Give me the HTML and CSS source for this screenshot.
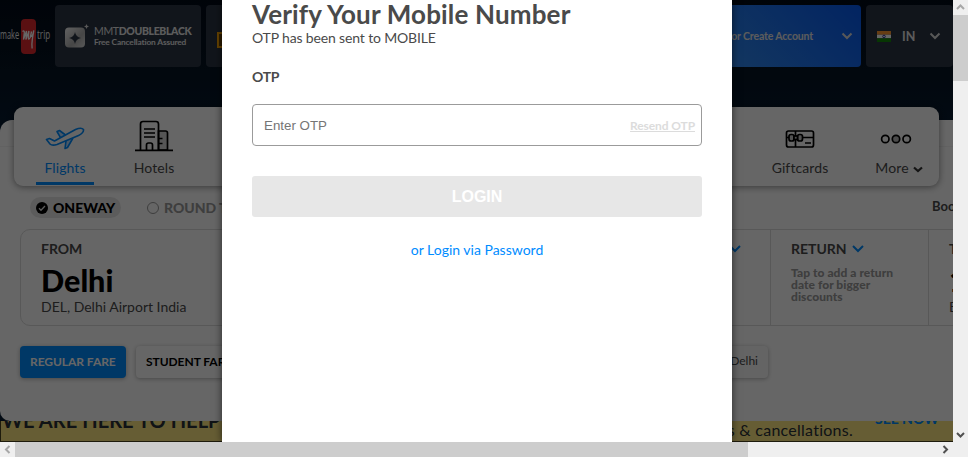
FILE: index.html
```html
<!DOCTYPE html>
<html lang="en">
<head>
<meta charset="utf-8">
<title>MakeMyTrip</title>
<link rel="stylesheet" href="styles.css">
</head>
<body>
<div class="frame">
  <div class="view">
    <div class="page">
      <header class="header">
        <div class="logo"><span class="logo-make">make</span><span class="logo-my"><svg width="15" height="35" viewBox="0 0 15 35"><path d="M1.500 12.500q2-1.500 1.800 1l-.8 7 3-8.500-.6 8.500 3-8.500-.5 7q.2 2.500 1.800-.5l1.300-6q-1 5 0 5 1.200-.5 2.300-6l-1.500 9q-.7 5-.2 9" fill="none" stroke="#fff" stroke-width="1.300"/></svg></span><span class="logo-trip">trip</span></div>
        <div class="pill pill-black">
          <svg class="star" width="24" height="24" viewBox="0 0 24 24"><defs><linearGradient id="s" x1="0" y1="0" x2="1" y2="1"><stop offset="0" stop-color="#f4f4f4"/><stop offset=".6" stop-color="#b0b0b0"/><stop offset="1" stop-color="#ddd"/></linearGradient></defs><rect x="0" y="3.500" width="20" height="20" rx="4" fill="url(#s)"/><path d="M10 8q.8 5.200 6 6-5.200.8-6 6-.8-5.200-6-6 5.200-.8 6-6z" fill="#2b3544"/><path d="M21.500 0l.8 1.700 1.700.8-1.700.8-.8 1.700-.8-1.700-1.700-.8 1.700-.8z" fill="#ddd"/></svg>
          <div class="black-text"><div class="black-title">MMT<b>DOUBLEBLACK</b></div><div class="black-sub">Free Cancellation Assured</div></div>
        </div>
        <div class="pill pill-biz"><span class="biz"></span></div>
        <div class="pill pill-login"><span>Login or Create Account</span><svg width="12" height="8" viewBox="0 0 12 8"><path d="M1.500 1.500L6 6l4.500-4.500" fill="none" stroke="#ddd" stroke-width="2"/></svg></div>
        <div class="pill pill-in"><svg width="14" height="11" viewBox="0 0 14 11"><path fill="#ff9933" d="M0 0h14v3.700H0z"/><path fill="#fff" d="M0 3.700h14v3.600H0z"/><path fill="#138808" d="M0 7.300h14V11H0z"/><circle cx="7" cy="5.500" r="1.300" fill="none" stroke="#339"/></svg><b>IN</b><svg width="12" height="8" viewBox="0 0 12 8"><path d="M1.500 1.500L6 6l4.500-4.500" fill="none" stroke="#ddd" stroke-width="2"/></svg></div>
      </header>
      <nav class="nav">
        <div class="tab tab-active">
          <svg width="40" height="24" viewBox="0 0 40 24" fill="none" stroke="#008cff" stroke-width="1.600" stroke-linejoin="round"><path d="M20.500 8L14.500 3.500l-2.500 1 3.500 6.200" fill="#b9dcff"/><path d="M28 11l-5.500 9.500-2.500 1 1-7.500" fill="#b9dcff"/><path d="M1.500 12.500l3-1 5 2.500L30.500 2.500q6-2.500 8 0 .5 3.500-5 6L12 17.500Q7 19 5 17z" fill="#fff"/></svg>
          <span>Flights</span>
        </div>
        <div class="tab">
          <svg width="40" height="32" viewBox="0 0 40 32" fill="none" stroke="#000" stroke-width="1.700"><path d="M24.500 11h7q2 0 2 2v17h-9z" fill="#d8d8d8"/><path d="M6.500 30V4q0-2.500 2.500-2.500h13q2.500 0 2.500 2.500v26M1 30.300h38M10 9h11M10 13h11M10 17h11M24.500 18.500h4M24.500 23.500h4M12.500 30v-5q0-2 2-2h2q2 0 2 2v5"/></svg>
          <span>Hotels</span>
        </div>
        <div class="tab tab-gift">
          <svg width="30" height="20" viewBox="0 0 30 20" fill="none" stroke="#000" stroke-width="1.700"><rect x="1.500" y="2" width="27" height="16" rx="2"/><path d="M1.500 8.500h27M10.500 2v16M20 14h6"/><rect x="4" y="5.500" width="5" height="6.500" rx="2" fill="#ccc"/><rect x="12.500" y="5.500" width="5" height="6.500" rx="2" fill="#ccc"/><rect x="9" y="7" width="3.500" height="3.500" fill="#ccc"/></svg>
          <span>Giftcards</span>
        </div>
        <div class="tab tab-more">
          <svg width="32" height="12" viewBox="0 0 32 12" stroke="#000" stroke-width="1.700"><circle cx="5.300" cy="6" r="3.700" fill="none"/><circle cx="16" cy="6" r="3.700" fill="#bbb"/><circle cx="26.700" cy="6" r="3.700" fill="none"/></svg>
          <span>More<svg width="10" height="7" viewBox="0 0 10 7"><path d="M1 1.500l4 3.500 4-3.500" fill="none" stroke="#333" stroke-width="2.200"/></svg></span>
        </div>
      </nav>
      <main class="card">
        <div class="trip-row">
          <div class="trip trip-on"><svg width="12" height="12" viewBox="0 0 12 12"><circle cx="6" cy="6" r="6"/><path d="M3 6.300l2 2 4-4.300" fill="none" stroke="#e7e7e7" stroke-width="1.300"/></svg>ONEWAY</div>
          <div class="trip trip-off"><i class="radio"></i>ROUND TRIP</div>
          <div class="book">Book International</div>
        </div>
        <div class="search">
          <div class="field from"><div class="label">FROM</div><div class="city">Delhi</div><div class="airport">DEL, Delhi Airport India</div></div>
          <div class="field depart"><svg width="12" height="8" viewBox="0 0 12 8"><path d="M1 1l5 5 5-5" fill="none" stroke="#008cff" stroke-width="2"/></svg></div>
          <div class="field return"><div class="label">RETURN<svg width="12" height="8" viewBox="0 0 12 8"><path d="M1 1l5 5 5-5" fill="none" stroke="#008cff" stroke-width="2"/></svg></div><div class="tap">Tap to add a return<br>date for bigger<br>discounts</div></div>
          <div class="field travel"><div class="label">TRAVELLERS</div><div class="city">1</div><div class="airport">Economy</div></div>
        </div>
        <div class="fares">
          <div class="fare fare-on">REGULAR FARE</div>
          <div class="fare">STUDENT FARE</div>
          <div class="fare recent">Delhi</div>
        </div>
      </main>
      <div class="banner"><span class="help">WE ARE HERE TO HELP</span><span class="cancel">changes &amp; cancellations.</span><span class="see">SEE NOW</span></div>
    </div>
    <div class="overlay"></div>
    <section class="modal">
      <h1>Verify Your Mobile Number</h1>
      <p class="sent">OTP has been sent to MOBILE</p>
      <p class="otp-label">OTP</p>
      <div class="otp-box"><span class="enter">Enter OTP</span><span class="resend">Resend OTP</span></div>
      <div class="login">LOGIN</div>
      <p class="via">or Login via Password</p>
    </section>
  </div>
  <div class="vbar">
    <svg width="15" height="15" viewBox="0 0 15 15"><path d="M4 9l3.500-3.500L11 9" fill="none" stroke="#a8a8a8" stroke-width="2"/></svg>
    <div class="vthumb"></div>
    <svg class="down" width="15" height="15" viewBox="0 0 15 15"><path d="M4 6l3.500 3.500L11 6" fill="none" stroke="#505050" stroke-width="2"/></svg>
  </div>
  <div class="hbar">
    <svg width="15" height="15" viewBox="0 0 15 15"><path d="M9.500 4L6 7.500 9.500 11" fill="none" stroke="#a8a8a8" stroke-width="2"/></svg>
    <div class="hthumb"></div>
    <svg class="right" width="15" height="15" viewBox="0 0 15 15"><path d="M5.500 4L9 7.500 5.500 11" fill="none" stroke="#505050" stroke-width="2"/></svg>
  </div>
</div>
</body>
</html>
```
FILE: styles.css
```css
* { box-sizing: border-box; }
body { margin: 0; font-family: Lato, "Liberation Sans", sans-serif; color: #000; }
svg { display: block; flex: none; }
h1, p { margin: 0; }
.frame { display: grid; grid-template: 442px 15px / 953px 15px; width: 968px; height: 457px; overflow: hidden; background: #efefef; }
.view { position: relative; overflow: hidden; }
.page { width: 953px; height: 442px; overflow: hidden; white-space: nowrap; background: linear-gradient(#020a18, #051423 70px, #061a31 130px, #061a31); }

.header { display: flex; gap: 5px; height: 107px; padding-top: 5px; }
.logo { display: flex; align-items: center; width: 50px; height: 62px; color: #eee; font: 12px "Open Sans", sans-serif; }
.logo span { flex: none; }
.logo-make { width: 21px; transform: translateY(-2px) scaleX(.62); transform-origin: left; }
.logo-my { width: 15px; height: 35px; border-radius: 4px; background: #e2282e; }
.logo-trip { margin-left: 1px; transform: translateY(-2px) scaleX(.67); transform-origin: left; }
.pill { display: flex; align-items: center; height: 62px; border-radius: 4px; background: #2b3544; color: #e6e6e6; flex: none; }
.pill-black { width: 146px; padding-left: 10px; gap: 5px; }
.black-title { font-size: 10.500px; line-height: 12px; letter-spacing: -.35px; }
.black-title b { font-weight: 900; }
.black-sub { font-size: 8.300px; line-height: 10px; font-weight: 700; letter-spacing: -.13px; }
.pill-biz { width: 450px; padding-left: 11px; }
.biz { width: 16px; height: 16px; border: 2px solid #ffa800; background: #6e4800; margin-top: 8px; }
.pill-login { width: 200px; justify-content: flex-end; gap: 28px; padding-right: 8px; background: linear-gradient(45deg, #3f9af0, #065af3); font-size: 10.500px; font-weight: 700; letter-spacing: -.15px; }
.pill-in { width: 87px; padding-left: 11px; }
.pill-in b { width: 38px; padding-left: 11px; font-size: 12.500px; }

.nav { position: relative; z-index: 1; display: flex; width: 925px; height: 79px; margin-left: 14px; border-radius: 9px; background: #fff; box-shadow: 0 1px 7px rgba(0, 0, 0, .45); }
.tab { flex: none; display: flex; flex-direction: column; align-items: center; width: 58px; height: 79px; margin-left: 31px; padding-top: 13px; color: #4a4a4a; font-size: 14px; line-height: 18px; letter-spacing: .1px; }
.tab svg { margin-bottom: 7px; }
.tab-active { margin-left: 22px; padding-top: 20px; border-bottom: 3px solid #008cff; margin-bottom: 1px; height: 78px; color: #008cff; }
.tab-active svg { margin-bottom: 8px; }
.tab-gift { margin-left: 587px; padding-top: 22px; width: 60px; }
.tab-gift svg { margin-bottom: 10px; }
.tab-more { margin-left: 40px; padding-top: 26px; }
.tab-more > svg { margin-bottom: 14px; margin-right: 7px; }
.tab-more span { display: flex; align-items: center; gap: 4px; }
.tab-more span svg { margin: 2px 0 0; }

.card { position: relative; height: 301px; margin-top: -66px; padding-top: 77px; border-radius: 12px 0 0 10px; background: #fff linear-gradient(#f4f4f4, #f4f4f4) 0 26px / 100% 1px no-repeat; }
.trip-row { display: flex; height: 21px; margin-left: 30px; font-size: 14px; line-height: 21px; }
.trip { display: flex; align-items: center; flex: none; }
.trip-on { width: 91px; gap: 5px; padding-left: 6px; border-radius: 11px; background: #e7e7e7; font-weight: 900; }
.trip-off { width: 120px; margin-left: 26px; gap: 5px; color: #9b9b9b; font-weight: 900; }
.radio { flex: none; width: 12px; height: 12px; border: 1px solid #9b9b9b; border-radius: 50%; }
.book { margin-left: 665px; font-size: 13px; font-weight: 700; color: #4a4a4a; line-height: 18px; }
.search { display: flex; width: 1080px; height: 97px; margin: 11px 0 0 20px; border: 1px solid #dcdcdc; border-radius: 10px; }
.field { flex: none; padding: 10px 0 0 20px; border-right: 1px solid #dcdcdc; }
.from { width: 500px; border-right: 0; }
.label { display: flex; align-items: center; gap: 5px; font-size: 14px; line-height: 18px; color: #4a4a4a; font-weight: 700; }
.city { margin-top: 5px; font-size: 30.500px; line-height: 35px; font-weight: 900; }
.airport { font-size: 14px; line-height: 18px; color: #4a4a4a; }
.depart { width: 250px; padding: 15px 0 0 208px; }
.return { width: 158px; }
.tap { margin-top: 9px; color: #9b9b9b; font-size: 12px; line-height: 12px; font-weight: 900; letter-spacing: .05px; }
.travel { width: 170px; }
.fares { display: flex; margin: 20px 0 0 20px; gap: 10px; }
.fare { flex: none; height: 32px; width: 106px; padding-left: 10px; border-radius: 4px; box-shadow: 0 1px 4px rgba(0, 0, 0, .3); font-size: 12px; line-height: 32px; font-weight: 700; letter-spacing: -.05px; }
.fare-on { background: #008cff; color: #fff; }
.recent { margin-left: 416px; width: 100px; padding-right: 10px; text-align: right; font-weight: 400; letter-spacing: 0; line-height: 30px; color: #4a4a4a; background: #fafafa; }
.banner { display: flex; height: 21px; border: solid #4b4520; border-width: 0 0 1px 1px; background: #ffe882; color: #283038; }
.help { width: 650px; margin: -14px 0 0 1px; font-size: 20px; line-height: 26px; font-weight: 700; letter-spacing: .05px; }
.cancel { width: 201px; font-size: 16px; line-height: 17px; text-align: right; letter-spacing: .25px; }
.see { margin: -12px 0 0 22px; font-size: 14px; line-height: 20px; font-weight: 900; color: #008cff; }

.overlay { position: absolute; inset: 0; z-index: 2; background: rgba(0, 0, 0, .6); }
.modal { position: absolute; z-index: 3; top: 0; left: 222px; width: 510px; height: 442px; padding: 0 30px; background: #fff; color: #4a4a4a; box-shadow: 0 0 8px rgba(0, 0, 0, .6); }
.modal h1 { font-size: 26px; line-height: 30px; font-weight: 700; margin-top: -1px; letter-spacing: .16px; }
.sent { font-size: 14px; line-height: 18px; letter-spacing: -.15px; }
.otp-label { margin-top: 21px; font-size: 14px; line-height: 18px; font-weight: 700; letter-spacing: -.3px; }
.otp-box { display: flex; justify-content: space-between; align-items: center; width: 450px; height: 42px; margin-top: 18px; padding: 0 6px 0 11px; border: 1px solid #9b9b9b; border-radius: 4px; }
.enter { font: 13.333px "Liberation Sans", sans-serif; color: #757575; }
.resend { font-size: 12px; font-weight: 700; color: #dcdcdc; text-decoration: underline; letter-spacing: -.1px; }
.login { width: 450px; height: 41px; margin-top: 30px; border-radius: 3px; background: #e7e7e7; color: #fff; text-align: center; font: bold 16px/41px "Liberation Sans", sans-serif; }
.via { margin-top: 24px; text-align: center; font-size: 14px; line-height: 18px; color: #008cff; }

.vbar { display: flex; flex-direction: column; background: #efefef; }
.vthumb { height: 66px; background: #cdcdcd; }
.down { margin-top: auto; }
.hbar { display: flex; width: 953px; background: #efefef; }
.hthumb { width: 733px; background: #cdcdcd; }
.right { margin-left: auto; }
```
